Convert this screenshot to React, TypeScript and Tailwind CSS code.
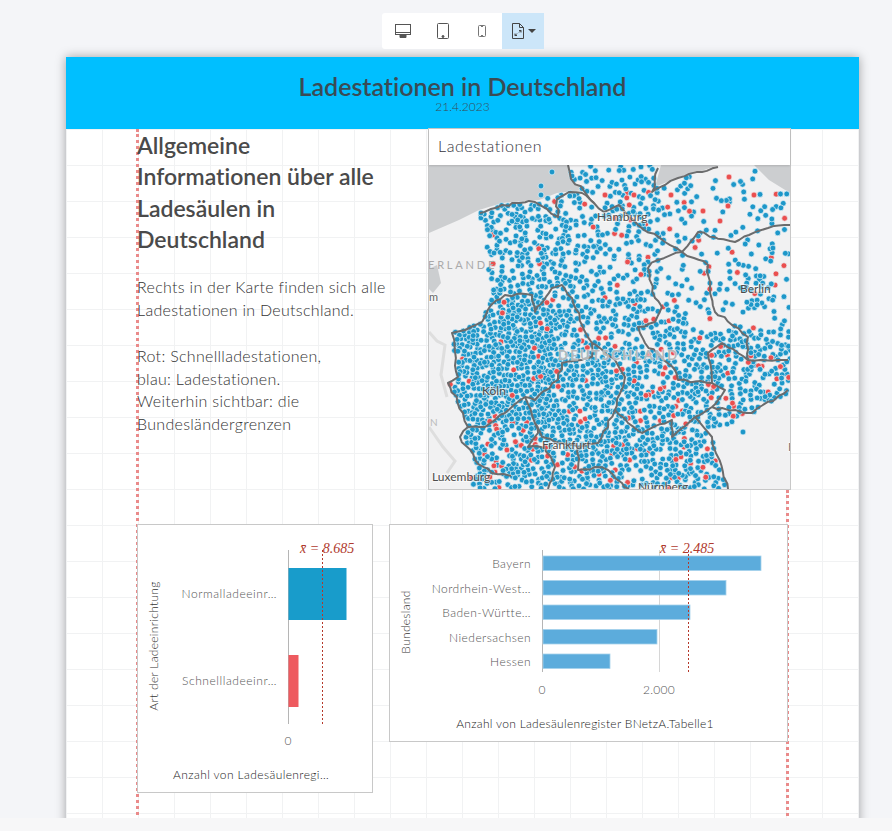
const sans = "font-['Lato','Noto_Sans',sans-serif] [font-variant-ligatures:none]";

// Germany, roughly, in map coordinates (361x324)
const germany: [number, number][] = [
  [139, -5], [142, 14], [155, 26], [128, 30], [106, 37], [73, 40], [51, 48], [58, 90], [62, 130], [53, 157], [23, 168],
  [29, 212], [19, 218], [34, 248], [39, 262], [31, 272], [46, 295], [39, 330], [299, 330], [283, 272], [286, 265],
  [323, 248], [365, 225], [365, 28], [340, 15], [325, -5], [290, -5], [272, 6], [250, 12], [226, 24], [232, -5],
];

function inside(x: number, y: number) {
  let hit = false;
  for (let i = 0, j = germany.length - 1; i < germany.length; j = i++) {
    const [xi, yi] = germany[i];
    const [xj, yj] = germany[j];
    if (yi > y !== yj > y && x < ((xj - xi) * (y - yi)) / (yj - yi) + xi) hit = !hit;
  }
  return hit;
}

function density(x: number, y: number) {
  if (Math.hypot(x - 327, y - 125) < 20) return 0.3;
  if (Math.hypot(x - 190, y - 42) < 16) return 0.4;
  if (x < 130 && y > 135 && y < 262) return 1;
  if (x < 200 && y > 180) return 0.5;
  if (x < 150 && y <= 135) return 0.33;
  if (x < 230 && y <= 135) return 0.18;
  if (x > 265 && y > 165) return 0.42;
  if (x >= 200 && y > 200) return 0.42;
  if (x < 265 && y > 135) return 0.28;
  return 0.07;
}

let seed = 20230421;
const rnd = () => {
  seed = (seed * 1664525 + 1013904223) % 4294967296;
  return seed / 4294967296;
};

function makeDots() {
  const dots: { x: number; y: number; red: boolean }[] = [];
  for (let i = 0; i < 16000; i++) {
    const x = rnd() * 361;
    const y = rnd() * 324;
    if (!inside(x, y) || rnd() > density(x, y)) continue;
    if (dots.some((d) => Math.abs(d.x - x) < 2.8 && Math.abs(d.y - y) < 2.8)) continue;
    dots.push({ x, y, red: rnd() < (x > 150 || y > 250 ? 0.09 : 0.03) });
  }
  return dots;
}

const dots = makeDots();
const loose: [number, number][] = [[123, 7], [112, 21], [112, 30], [52, 48], [65, 88], [314, 267]];
const looseRed: [number, number][] = [[300, 12], [325, 30], [299, 41], [274, 46], [176, 30], [205, 30], [242, 30]];

const borderLines = [
  "139,0 142,14 155,26 165,38 175,47 190,40 200,52 209,60 236,77 253,87 269,67 285,72 306,77 320,70 339,63 361,60",
  "51,48 62,44 73,40 90,38 106,37 118,44 129,52 128,34 140,27 153,28 165,38",
  "229,3 223,27 236,20 249,13 273,7 289,2",
  "253,87 229,95 219,103 226,133 233,142 226,157 209,162 216,178 246,205 249,215 283,218 279,188 293,178 319,195 359,195",
  "253,87 279,100 281,123 286,147 303,160 319,172 319,195",
  "53,157 62,140 76,130 103,130 106,147 123,123 133,120 143,133 153,160 163,178 163,192 133,198 129,215 106,235 96,232 56,262 39,262",
  "53,157 42,162 23,168 29,212 19,218 34,248 39,262 31,272 46,295 63,308 82,311",
  "163,178 186,195 196,212 186,245 199,258 213,268 243,255 243,272 266,252 283,242 296,225 283,218",
  "283,242 323,248 359,225",
  "266,252 283,272 299,324",
  "186,245 169,278 149,282 132,278 113,272 106,258 96,232",
  "106,258 109,268 99,282 116,283 126,302 119,324",
  "149,282 149,305 166,302 179,305 193,318 200,324",
];

// break straight runs into short wobbly pieces, the way real borders look
function jag(line: string) {
  const pts = line.split(" ").map((p) => p.split(",").map(Number));
  let d = `M${pts[0][0]},${pts[0][1]}`;
  for (let i = 1; i < pts.length; i++) {
    const [ax, ay] = pts[i - 1];
    const [bx, by] = pts[i];
    const steps = Math.max(1, Math.round(Math.hypot(bx - ax, by - ay) / 6));
    for (let s = 1; s <= steps; s++) {
      const t = s / steps;
      const wob = s === steps ? 0 : 1;
      d += ` L${(ax + (bx - ax) * t + (rnd() - 0.5) * 3 * wob).toFixed(1)},${(ay + (by - ay) * t + (rnd() - 0.5) * 3 * wob).toFixed(1)}`;
    }
  }
  return d;
}

const borders = borderLines.map(jag);

function MapCard() {
  return (
    <div className="w-[363px] h-[362px] -mt-px ml-[291px] flex flex-col border border-[#c8c8c8] bg-white shrink-0">
      <div className="h-[36px] flex items-center px-[9px] pb-[2px] text-[16px] tracking-[0.55px] font-light text-[#33333c] shadow-[0_1px_2px_rgba(0,0,0,0.15)] z-10">
        Ladestationen
      </div>
      <svg viewBox="0 0 361 324" className="w-[361px] h-[324px] bg-[#f1f1f2]">
        <path d="M0,0 L140,0 L142,15 L155,25 L128,28 L110,35 L73,38 L50,45 L30,55 L0,68 Z" fill="#ccced0" />
        <path d="M232,0 L226,22 L250,12 L272,6 L290,0 Z M325,0 L340,15 L361,28 L361,0 Z" fill="#ccced0" />
        <path d="M0,104 L8,100 L12,118 L4,128 L0,124 Z" fill="#ccced0" />
        <path d="M0,167 L8,176 L16,180 L12,210 L18,232 M0,262 L14,282 L26,296 L18,308" fill="none" stroke="#dedede" strokeWidth="3" />
        {dots.map((d, i) => (
          <circle key={i} cx={d.x} cy={d.y} r="2.9" fill={d.red ? "#ea4f4f" : "#1d97c9"} stroke="#e9f4f8" strokeWidth="0.7" />
        ))}
        {loose.map(([x, y], i) => (
          <circle key={i} cx={x} cy={y} r="2.9" fill="#1d97c9" stroke="#e9f4f8" strokeWidth="0.7" />
        ))}
        {looseRed.map(([x, y], i) => (
          <circle key={i} cx={x} cy={y} r="2.9" fill="#ea4f4f" stroke="#f7e9e9" strokeWidth="0.7" />
        ))}
        {borders.map((d, i) => (
          <path key={i} d={d} fill="none" stroke="#6b6c6d" strokeWidth="2" strokeLinejoin="round" />
        ))}
        <g fontFamily="Lato, sans-serif" fontSize="12" fill="#4d4d4d" stroke="#fff" strokeWidth="2" strokeOpacity="0.5" paintOrder="stroke">
          <text x="168" y="56" letterSpacing="0.3">Hamburg</text>
          <text x="311" y="128">Berlin</text>
          <text x="53" y="230">Köln</text>
          <text x="113" y="284">Frankfurt</text>
          <text x="3" y="316">Luxemburg</text>
          <text x="209" y="326">Nürnberg</text>
          <text x="0" y="136" fontSize="11" fill="#666">m</text>
          <text x="359" y="286" fill="#777">F</text>
        </g>
        <text x="-1" y="104" fontFamily="Lato, sans-serif" fontSize="11" letterSpacing="2.8" fill="#aaa">ERLANDE</text>
        <text x="1" y="261" fontFamily="Lato, sans-serif" fontSize="10" fill="#bbb">N</text>
        <text x="129" y="195" fontFamily="Lato, sans-serif" fontSize="13" fontWeight="700" letterSpacing="2.3" fill="#b4b8ba" stroke="#fff" strokeWidth="1.5" strokeOpacity="0.5" paintOrder="stroke">
          DEUTSCHLAND
        </text>
      </svg>
    </div>
  );
}

const meanText = "Liberation Serif, serif";

function FirstChart() {
  return (
    <div className="w-[236px] h-[269px] border border-[#c8c8c8] bg-white shrink-0">
      <svg viewBox="0 0 234 267" className="w-[234px] h-[267px]" fontFamily="Lato, sans-serif" fontSize="12" fontWeight="300">
        <line x1="150.5" y1="25" x2="150.5" y2="199" stroke="#b5b5b5" />
        <rect x="150.5" y="43" width="58" height="52" fill="#189ccb" />
        <rect x="150.5" y="130" width="10" height="52" fill="#ee5a5f" />
        <line x1="184.5" y1="25" x2="184.5" y2="199" stroke="#b5382a" strokeDasharray="2 2" />
        <text x="162" y="28" fontFamily={meanText} fontStyle="italic" fontSize="14" fill="#b03a2e">x̄ = 8.685</text>
        <text x="139" y="73" textAnchor="end" fill="#555" letterSpacing="0.55">Normalladeeinr…</text>
        <text x="139" y="160" textAnchor="end" fill="#555" letterSpacing="0.55">Schnellladeeinr…</text>
        <text transform="translate(20 121) rotate(-90)" textAnchor="middle" fill="#333" letterSpacing="0.3">Art der Ladeeinrichtung</text>
        <text x="150" y="220" textAnchor="middle" fill="#555">0</text>
        <text x="113" y="254" textAnchor="middle" fill="#222" letterSpacing="0.4">Anzahl von Ladesäulenregi…</text>
      </svg>
    </div>
  );
}

const bundeslaender = [
  { name: "Bayern", y: 31, w: 218 },
  { name: "Nordrhein-West…", y: 55.5, w: 183 },
  { name: "Baden-Württe…", y: 80, w: 147 },
  { name: "Niedersachsen", y: 104.5, w: 114 },
  { name: "Hessen", y: 129, w: 67 },
];

function SecondChart() {
  return (
    <div className="w-[399px] h-[218px] border border-[#c8c8c8] bg-white shrink-0">
      <svg viewBox="0 0 397 216" className="w-[397px] h-[216px]" fontFamily="Lato, sans-serif" fontSize="12" fontWeight="300">
        <line x1="269.5" y1="25" x2="269.5" y2="147" stroke="#d6d6d6" />
        <line x1="152.5" y1="25" x2="152.5" y2="147" stroke="#b5b5b5" />
        {bundeslaender.map((b) => (
          <g key={b.name}>
            <rect x="153" y={b.y} width={b.w} height="14.5" fill="#5cacdc" stroke="#a5d2ec" strokeWidth="0.8" />
            <text x="141" y={b.y + 12} textAnchor="end" fill="#555" letterSpacing="0.45">{b.name}</text>
          </g>
        ))}
        <line x1="298.5" y1="25" x2="298.5" y2="147" stroke="#b5382a" strokeDasharray="2 2" />
        <text x="270" y="28" fontFamily={meanText} fontStyle="italic" fontSize="14" fill="#b03a2e">x̄ = 2.485</text>
        <text transform="translate(20 97) rotate(-90)" textAnchor="middle" fill="#333" letterSpacing="0.3">Bundesland</text>
        <text x="152" y="169" textAnchor="middle" fill="#555">0</text>
        <text x="269" y="169" textAnchor="middle" fill="#555" letterSpacing="0.3">2.000</text>
        <text x="195" y="203" textAnchor="middle" fill="#222" letterSpacing="0.3">Anzahl von Ladesäulenregister BNetzA.Tabelle1</text>
      </svg>
    </div>
  );
}

function Toolbar() {
  return (
    <div className="flex justify-center ml-[66px] w-[793px] pt-[13px] h-[57px]">
      <div className="flex h-[36px] w-[162px] rounded-l-[3px] bg-white overflow-hidden">
        <div className="w-[42px] flex items-center justify-center">
          <svg width="16" height="14" viewBox="0 0 16 14" fill="none" stroke="#555">
            <rect x="0.5" y="0.5" width="15" height="10" />
            <path d="M0.5 8.5 H15.5" />
            <path d="M5 13.5 H11 V11 H5 Z" fill="#555" />
          </svg>
        </div>
        <div className="w-[39px] flex items-center justify-center">
          <svg width="12" height="16" viewBox="0 0 12 16" fill="none" stroke="#555">
            <rect x="0.5" y="0.5" width="11" height="15" rx="1" />
            <circle cx="6" cy="13.5" r="1" fill="#555" />
          </svg>
        </div>
        <div className="w-[39px] flex items-center justify-center">
          <svg width="8" height="12" viewBox="0 0 8 12" fill="none" stroke="#777">
            <rect x="0.5" y="0.5" width="7" height="11" rx="1" />
            <path d="M3 1.5 H5 M3 10.5 H5" />
          </svg>
        </div>
        <div className="w-[42px] bg-[#cce6f9] flex items-center justify-center gap-[4px] pl-[2px]">
          <svg width="12" height="16" viewBox="0 0 12 16" fill="none" stroke="#444">
            <path d="M0.5 0.5 H7.5 L11.5 4.5 V15.5 H0.5 Z M7.5 0.5 V4.5 H11.5" />
            <path d="M3 12.5 L5 10.5 M3 10.5 V12.5 H5 M9 7.5 L7 9.5 M7 7.5 H9 V9.5" />
          </svg>
          <svg width="8" height="4" viewBox="0 0 8 4" fill="#444">
            <path d="M0 0 H8 L4 4 Z" />
          </svg>
        </div>
      </div>
    </div>
  );
}

export default function App() {
  return (
    <div className={`w-[892px] h-[831px] overflow-hidden bg-[#f7f7f8] ${sans}`}>
      <div className="h-[818px] overflow-hidden bg-[#f4f5f8]">
        <Toolbar />
        <div className="ml-[66px] w-[793px] h-[800px] bg-white shadow-[0_0_10px_rgba(0,0,0,0.35)]">
          <header className="h-[72px] bg-[#00bfff] flex flex-col items-center pt-[16px] text-[#3a4b55]">
            <h1 className="text-[25px] leading-[26px] font-semibold">Ladestationen in Deutschland</h1>
            <p className="text-[12px] leading-[14px] mt-[1px] font-light">21.4.2023</p>
          </header>
          <div className="relative h-[728px] bg-[linear-gradient(to_right,#f1f2f3_1px,transparent_1px),linear-gradient(to_bottom,#f1f2f3_1px,transparent_1px)] bg-[size:36px_36px]">
            <div className="absolute left-[70px] top-0 h-full w-0 border-l-[3px] border-dotted border-[#ea8a8a]" />
            <div className="absolute left-[720px] top-[361px] h-[367px] w-0 border-l-[3px] border-dotted border-[#ea8a8a]" />
            <div className="relative h-full pl-[71px]">
              <div className="flex h-[361px]">
                <div className="w-0">
                  <div className="w-[262px]">
                    <h2 className="text-[23px] leading-[31.3px] font-semibold text-[#4a4a4a] mt-[1px]">
                      Allgemeine Informationen über alle Ladesäulen in Deutschland
                    </h2>
                    <div className="mt-[21px] text-[16px] leading-[22.8px] font-light text-[#333] tracking-[0.3px]">
                      <p>Rechts in der Karte finden sich alle Ladestationen in Deutschland.</p>
                      <p className="mt-[23px]">Rot: Schnellladestationen,</p>
                      <p>blau: Ladestationen.</p>
                      <p>Weiterhin sichtbar: die</p>
                      <p>Bundesländergrenzen</p>
                    </div>
                  </div>
                </div>
                <MapCard />
              </div>
              <div className="flex items-start gap-[16px] mt-[34px]">
                <FirstChart />
                <SecondChart />
              </div>
            </div>
          </div>
        </div>
      </div>
    </div>
  );
}
